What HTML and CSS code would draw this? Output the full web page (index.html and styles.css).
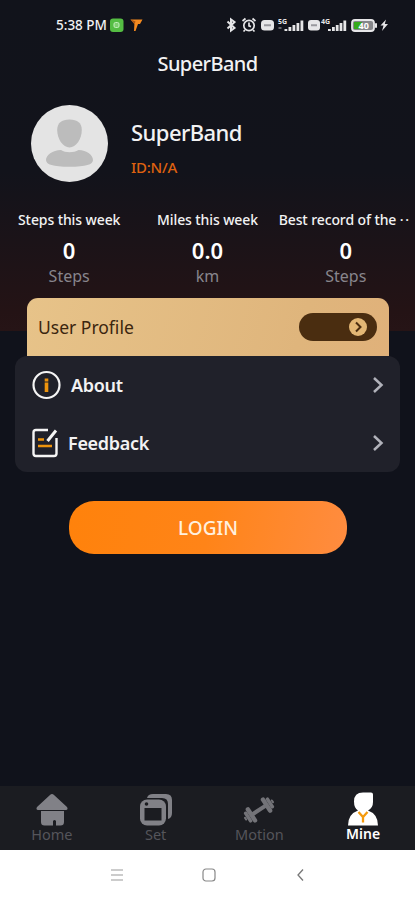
FILE: index.html
```html
<!DOCTYPE html>
<html lang="en">
<head>
<meta charset="utf-8">
<meta name="viewport" content="width=device-width, initial-scale=1">
<title>SuperBand</title>
<link rel="stylesheet" href="styles.css">
</head>
<body>
<div class="app">
  <div class="hero">
    <header class="status">
      <span class="clock">5:38 PM</span>
      <svg class="notices" width="34" height="14" viewBox="0 0 34 14">
        <rect x="0" y="0.500" width="13.500" height="13.500" rx="3" fill="#55bd43"/>
        <rect x="4" y="4.500" width="5" height="5" rx="1.500" fill="#7fd070" stroke="#c5efbc"/>
        <path d="M20.500 1.500h12l-2.500 4.500h-2L25.500 13h-1.500l.4-7z" fill="#f58a1f"/>
        <path d="M20.500 1.500l5 2-1 2.500z" fill="#a85516"/>
      </svg>
      <svg class="signals" width="164" height="18" viewBox="0 0 164 18" fill="none" stroke="#e6e6e8">
        <path d="M1.500 5.500l7 6.500L5 14.500v-11L8.500 6l-7 6.500" stroke-width="2"/>
        <g stroke-width="1.700"><circle cx="23" cy="9.500" r="5.200"/><path d="M23 6.500v3.300l2 .8M16.500 5l3-2.500M29.500 5l-3-2.500M19 14l-1.500 1.500M27 14l1.500 1.500"/></g>
        <g fill="#e6e6e8" stroke="none">
          <rect x="35" y="4" width="13" height="10.500" rx="3.500"/>
          <rect x="82" y="4" width="12" height="10.500" rx="3"/>
          <path d="M58.500 13h2.800v2h-2.800zM62.500 11h2.800v4h-2.800zM66.500 9h2.800v6h-2.800zM70.500 7h2.800v8h-2.800zM74.500 4.500h2.800V15h-2.800z"/>
          <path d="M102 13h2.800v2H102zM106 11h2.800v4H106zM109.800 9h2.800v6h-2.800zM113.600 7h2.800v8h-2.800zM117.400 4.500h2.800V15h-2.800z"/>
          <path d="M52.500 11h3v2h-3z" fill="#66666d"/>
          <rect x="149" y="7" width="2" height="5" rx="1"/>
          <path d="M160 3.500l-5.500 6h3l-1.500 5.500 6-7h-3.200z"/>
          <text x="52" y="7.500" class="mini">5G</text>
          <text x="95" y="7.500" class="mini">4G</text>
        </g>
        <path d="M38 9.200h7M85 9.200h6" stroke="#99999e" stroke-width="2"/>
        <rect x="126" y="4" width="22" height="11" rx="3" fill="#85868a" stroke-width="1.800"/>
        <path d="M128 6h8l-2 7h-6z" fill="#36aa1c" stroke="none"/>
        <text x="132.500" y="13" class="charge">40</text>
      </svg>
    </header>
    <h1 class="title">SuperBand</h1>
    <section class="profile">
      <svg class="avatar" width="77" height="77" viewBox="0 0 77 77">
        <circle cx="38.500" cy="38.500" r="38.500" fill="#e4e4e4"/>
        <path d="M38.500 14.500c8 0 12.300 3.500 12.300 10.500 0 9-5.800 17.500-12.300 17.500S26.200 34 26.200 25c0-7 4.300-10.500 12.300-10.500z" fill="#bcbcbc"/>
        <path d="M30 45c2.500 1.500 5 2.200 8.500 2.200S45 46.500 47.500 45C56 45.500 62 50 62 55c0 4.500-7 6.800-23.500 6.800S15 59.500 15 55c0-5 6.500-9.500 15-10z" fill="#bcbcbc"/>
      </svg>
      <div>
        <div class="name">SuperBand</div>
        <div class="uid">ID:N/A</div>
      </div>
    </section>
    <section class="stats">
      <div class="stat"><span class="label">Steps this week</span><b>0</b><span class="unit">Steps</span></div>
      <div class="stat"><span class="label">Miles this week</span><b>0.0</b><span class="unit">km</span></div>
      <div class="stat last"><span class="label">Best record of the <i class="dots">··</i></span><b>0</b><span class="unit">Steps</span></div>
    </section>
  </div>
  <main class="content">
    <div class="card">
      <span>User Profile</span>
      <div class="pill">
        <svg width="18" height="18" viewBox="0 0 18 18"><circle cx="9" cy="9" r="9" fill="#e3b775"/><path d="M7 4.500l4.500 4.500L7 13.500" fill="none" stroke="#4a2d10" stroke-width="2"/></svg>
      </div>
    </div>
    <div class="menu">
      <div class="row about">
        <svg width="29" height="30" viewBox="0 0 29 30"><circle cx="14.500" cy="15" r="13" fill="none" stroke="#f5f5f5" stroke-width="2.200"/><path d="M12.700 12.500h3.600v9.500h-3.600zM12.700 8.500h3.600v3h-3.600z" fill="#ee940d"/></svg>
        <span>About</span>
        <svg class="chev" width="12" height="18" viewBox="0 0 12 18"><path d="M2 2l7.500 7L2 16" fill="none" stroke="#b1b2ba" stroke-width="2.500"/></svg>
      </div>
      <div class="row feedback">
        <svg width="26" height="30" viewBox="0 0 26 30" fill="none"><path d="M16 2H4Q1.500 2 1.500 4.500V25.500Q1.500 28 4 28H22Q24.500 28 24.500 25.500V10" stroke="#f5f5f5" stroke-width="2.400"/><path d="M24 2.500l-8.500 10.500" stroke="#f5f5f5" stroke-width="3"/><path d="M6 11.500h6M6 18h14" stroke="#ee940d" stroke-width="2.700"/></svg>
        <span>Feedback</span>
        <svg class="chev" width="12" height="18" viewBox="0 0 12 18"><path d="M2 2l7.500 7L2 16" fill="none" stroke="#b1b2ba" stroke-width="2.500"/></svg>
      </div>
    </div>
    <button class="login">LOGIN</button>
  </main>
  <nav class="tabs">
    <div class="tab">
      <svg width="34" height="34" viewBox="0 0 34 34" fill="#818187"><path d="M17 2Q18 2 19 3L32 15Q33.500 17.500 31 18H3Q.5 17.500 2 15L15 3Q16 2 17 2z"/><path d="M6 19h23v11q0 3.500-3.500 3.500H21V29q-1.500-2-3 0v4.500H9.500Q6 33.500 6 30z"/></svg>
      <span>Home</span>
    </div>
    <div class="tab">
      <svg width="34" height="34" viewBox="0 0 34 34"><path d="M8 6Q9 2 14 2h13q6 0 6 6v13q0 5-4 6V12q0-6-6-6z" fill="#818187"/><rect x="1" y="7.500" width="26" height="26" rx="7" fill="#818187"/><rect x="5.500" y="16" width="17" height="12.500" fill="#1b1c21"/><circle cx="7.500" cy="12" r="1.800" fill="#1b1c21"/></svg>
      <span>Set</span>
    </div>
    <div class="tab">
      <svg width="34" height="34" viewBox="0 0 34 34"><g transform="rotate(-33 17 18)" stroke="#737378" stroke-linecap="round" fill="none"><path d="M9 18h16" stroke-width="4"/><path d="M8 11.500v13M26 11.500v13" stroke-width="4.500"/><path d="M4 13.500v9M30 13.500v9" stroke-width="3.500"/><path d="M1 17v2M33 17v2" stroke-width="2"/></g></svg>
      <span>Motion</span>
    </div>
    <div class="tab active">
      <svg width="34" height="34" viewBox="0 0 34 34"><path d="M17 0.500h8q2 0 2 2v7.500q0 6-5 8.500Q32 22 32 33.500H2Q2 22 12 18.500 8 16 8 9.500 8 .5 17 .5z" fill="#fff"/><path d="M12.500 20l4.500 5 4.500-5M17 25v5.500" fill="none" stroke="#f49a0d" stroke-width="2.300"/></svg>
      <span>Mine</span>
    </div>
  </nav>
  <footer class="system">
    <svg width="14" height="14" viewBox="0 0 14 14"><path d="M1 2h12M1 7h12M1 12h12" stroke="#999" stroke-width="1.200"/></svg>
    <svg width="14" height="14" viewBox="0 0 14 14"><rect x="1" y="1" width="12" height="12" rx="3" fill="none" stroke="#888" stroke-width="1.200"/></svg>
    <svg width="14" height="14" viewBox="0 0 14 14"><path d="M10 1.500L5 7l5 5.500" fill="none" stroke="#777" stroke-width="1.300"/></svg>
  </footer>
</div>
</body>
</html>
```
FILE: styles.css
```css
* { box-sizing: border-box; }
body { margin: 0; font-family: "Noto Sans", "Open Sans", sans-serif; color: #f2f2f3; background: #10121b; }
svg { display: block; flex: none; }
.app { width: 415px; height: 900px; display: flex; flex-direction: column; overflow: hidden; }
.hero { height: 331px; flex: none; background: linear-gradient(#11131b 0, #12131b 52%, #241315 94%, #261416 100%); }
.status { height: 50px; padding: 0 25px 0 56px; display: flex; align-items: center; }
.clock { width: 53px; font-size: 13.5px; font-weight: 500; white-space: nowrap; }
.notices { margin-left: 1px; }
.signals { margin-left: auto; }
.mini { font-size: 7px; font-weight: 700; }
.charge { font-size: 9px; font-weight: 700; fill: #fff; stroke: none; }
.title { margin: 0; height: 28px; line-height: 28px; text-align: center; font-size: 20px; font-weight: 500; letter-spacing: -.6px; }
.profile { height: 77px; margin-top: 27px; padding-left: 31px; display: flex; gap: 23px; }
.name { margin-top: 12px; line-height: 30px; font-size: 22px; font-weight: 500; letter-spacing: -.55px; }
.uid { margin-top: 10px; line-height: 20px; font-size: 15px; font-weight: 500; letter-spacing: -.25px; color: #dd6110; }
.stats { margin-top: 26px; display: grid; grid-template-columns: repeat(3, 1fr); text-align: center; }
.stat { display: flex; flex-direction: column; white-space: nowrap; }
.label { line-height: 24px; font-size: 14px; font-weight: 500; letter-spacing: -.1px; }
.last .label { text-align: left; padding-left: 2px; }
.dots { font-style: normal; letter-spacing: 1.5px; }
.stat b { line-height: 36px; font-size: 22px; font-weight: 600; color: #fff; }
.unit { line-height: 16px; font-size: 16px; color: #88858c; }
.content { flex: 1; padding: 0 15px; margin-top: -33px; }
.card { height: 58px; margin: 0 11px 0 12px; padding: 0 12px 0 11px; border-radius: 11px 11px 0 0; display: flex; align-items: center; justify-content: space-between; background: linear-gradient(105deg, #e7c389, #dfb57c 75%, #e0b17a); color: #3b260f; font-size: 17.5px; }
.pill { width: 78px; height: 28px; padding-right: 10px; border-radius: 14px; display: flex; align-items: center; justify-content: flex-end; background: #4a2d10; }
.menu { height: 116px; border-radius: 12px; background: #20212a; }
.row { height: 58px; padding: 0 16px 0 17px; display: flex; align-items: center; font-size: 18px; font-weight: 600; letter-spacing: -.3px; }
.row span { margin-left: 10px; }
.chev { margin-left: auto; }
.login { display: block; width: 278px; height: 53px; margin: 29px 0 0 54px; padding: 0; border: 0; border-radius: 25px; background: linear-gradient(100deg, #ff820b, #ff8418 50%, #ff8c40); color: #fff0df; font: 500 19px "Noto Sans", sans-serif; }
.tabs { height: 64px; flex: none; padding-top: 6px; display: grid; grid-template-columns: repeat(4, 1fr); background: #1b1c21; }
.tab { display: flex; flex-direction: column; align-items: center; color: #55555b; font-size: 14.5px; line-height: 16px; }
.tab.active { color: #fff; font-weight: 600; font-size: 14px; }
.system { height: 50px; flex: none; padding: 0 108px 0 110px; display: flex; align-items: center; justify-content: space-between; background: #fff; }
```
